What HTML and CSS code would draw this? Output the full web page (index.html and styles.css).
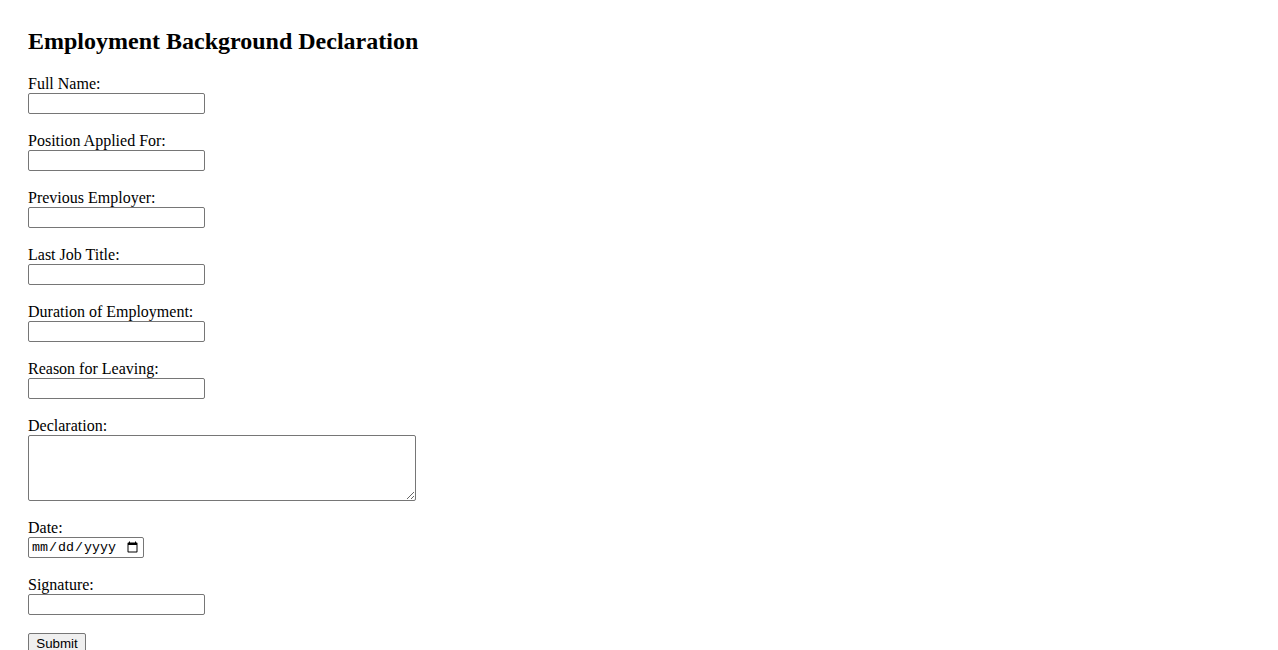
FILE: index.html
```html
<!DOCTYPE html>
<html>
<head>
<meta charset="utf-8">
<title>Employment Background Declaration</title>
<link rel="stylesheet" href="styles.css">
</head>
<body>
<div class="page">
<h2 class="title">Employment Background Declaration</h2>
<form class="form">
<label class="label" for="name">Full Name:</label><br>
<input class="field" type="text" id="name"><br><br>
<label class="label" for="position">Position Applied For:</label><br>
<input class="field" type="text" id="position"><br><br>
<label class="label" for="employer">Previous Employer:</label><br>
<input class="field" type="text" id="employer"><br><br>
<label class="label" for="title">Last Job Title:</label><br>
<input class="field" type="text" id="title"><br><br>
<label class="label" for="duration">Duration of Employment:</label><br>
<input class="field" type="text" id="duration"><br><br>
<label class="label" for="reason">Reason for Leaving:</label><br>
<input class="field" type="text" id="reason"><br><br>
<label class="label" for="declaration">Declaration:</label><br>
<textarea class="area" id="declaration" rows="4"></textarea><br><br>
<label class="label" for="date">Date:</label><br>
<input class="date" type="date" id="date"><br><br>
<label class="label" for="signature">Signature:</label><br>
<input class="field" type="text" id="signature"><br><br>
<button class="submit" type="submit">Submit</button>
</form>
</div>
</body>
</html>
```
FILE: styles.css
```css
html, body {
  margin: 0;
  padding: 0;
  background: #fff;
}
body {
  font-family: "Liberation Serif", "Times New Roman", serif;
  font-size: 16px;
  color: #000;
}
.page {
  padding: 28px 28px 20px 28px;
}
.title {
  font-size: 24px;
  font-weight: bold;
  margin: 0 0 20px 0;
}
.form {
  margin: 0;
}
.label {
  font-size: 16px;
}
.field {
  box-sizing: border-box;
  width: 177px;
  height: 21px;
  margin: 0;
  padding: 1px 2px;
  border: 1px solid #767676;
  border-radius: 2px;
  font-family: "Liberation Sans", Arial, sans-serif;
  font-size: 13.33px;
  vertical-align: baseline;
}
.area {
  box-sizing: border-box;
  width: 388px;
  height: 66px;
  margin: 0;
  padding: 2px;
  border: 1px solid #767676;
  border-radius: 2px;
  font-family: "Liberation Mono", monospace;
  font-size: 13.33px;
  vertical-align: bottom;
}
.date {
  box-sizing: border-box;
  width: 116px;
  height: 21px;
  margin: 0;
  padding: 1px 2px;
  border: 1px solid #767676;
  border-radius: 2px;
  font-family: "Liberation Mono", monospace;
  font-size: 13.33px;
}
.submit {
  box-sizing: border-box;
  height: 21px;
  width: 58px;
  margin: 0;
  padding: 1px 6px;
  border: 1px solid #767676;
  border-radius: 2px;
  background: #efefef;
  font-family: "Liberation Sans", Arial, sans-serif;
  font-size: 13.33px;
  color: #000;
}
```
